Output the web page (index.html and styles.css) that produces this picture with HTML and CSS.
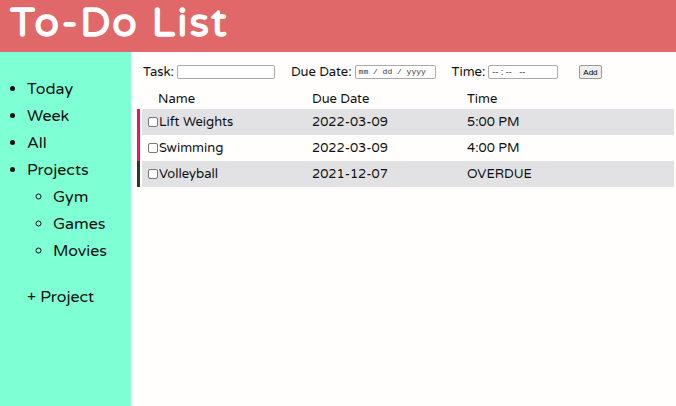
FILE: index.html
```html
<!DOCTYPE html>
<html>
<head>
<meta charset="utf-8">
<link rel="stylesheet" href="styles.css">
</head>
<body>
<header class="header"><h1 class="title">To-Do List</h1></header>
<div class="layout">
  <nav class="sidebar">
    <ul class="nav">
      <li>Today</li>
      <li>Week</li>
      <li>All</li>
      <li>Projects
        <ul class="sub">
          <li>Gym</li>
          <li>Games</li>
          <li>Movies</li>
        </ul>
      </li>
    </ul>
    <div class="add-project">+ Project</div>
  </nav>
  <main class="main">
    <form class="form">
      <label class="field">Task: <input class="inp inp-task" type="text"></label>
      <label class="field">Due Date: <span class="inp inp-date">mm / dd / yyyy</span></label>
      <label class="field">Time: <span class="inp inp-time">-- : --&nbsp;&nbsp;&nbsp;--</span></label>
      <button class="btn" type="button">Add</button>
    </form>
    <div class="thead">
      <span class="c1">Name</span><span class="c2">Due Date</span><span class="c3">Time</span>
    </div>
    <div class="row pink gray">
      <div class="cells"><span class="c1"><span class="cb"></span>Lift Weights</span><span class="c2">2022-03-09</span><span class="c3">5:00 PM</span></div>
    </div>
    <div class="row pink">
      <div class="cells"><span class="c1"><span class="cb"></span>Swimming</span><span class="c2">2022-03-09</span><span class="c3">4:00 PM</span></div>
    </div>
    <div class="row dark gray">
      <div class="cells"><span class="c1"><span class="cb"></span>Volleyball</span><span class="c2">2021-12-07</span><span class="c3">OVERDUE</span></div>
    </div>
  </main>
</div>
</body>
</html>
```
FILE: styles.css
```css
* { box-sizing: border-box; }
html, body { margin: 0; padding: 0; height: 100%; }
body {
  font-family: "Varela Round", "Noto Sans", "Open Sans", sans-serif;
  background: #fffefc;
  color: #111;
  display: flex;
  flex-direction: column;
  overflow: hidden;
}
.header {
  background: #e06868;
  height: 52px;
  flex: none;
}
.title {
  margin: -2px 0 0 0;
  padding-left: 10px;
  font-size: 41px;
  font-weight: 700;
  letter-spacing: 2px;
  line-height: 50px;
  color: #fff;
}
.layout { flex: 1; display: flex; }
.sidebar {
  width: 131px;
  background: #7fffd4;
  flex: none;
  padding-top: 24px;
}
.nav {
  margin: 0;
  padding-left: 27px;
  font-size: 16px;
  list-style: disc;
}
.nav > li { line-height: 27px; }
.sub {
  margin: 0;
  padding-left: 26px;
  list-style: circle;
}
.add-project {
  font-size: 16px;
  padding-left: 27px;
  margin-top: 22px;
}
.main { flex: 1; padding-top: 12px; padding-left: 6px; padding-right: 2px; }
.form {
  display: flex;
  align-items: center;
  font-size: 13px;
  padding-left: 6px;
  height: 16px;
}
.field { display: flex; align-items: center; margin-right: 16px; }
.inp {
  display: inline-block;
  height: 14px;
  border: 1px solid #aaa;
  border-radius: 2px;
  background: #fff;
  margin-left: 3px;
  font-family: "Liberation Mono", monospace;
  font-size: 8px;
  line-height: 12px;
  padding: 0 3px;
  color: #333;
}
.inp-task { width: 98px; }
.inp-date { width: 81px; }
.inp-time { width: 70px; font-family: "Liberation Sans", sans-serif; font-size: 9px; }
.btn {
  margin-left: 5px;
  height: 14px;
  padding: 0 3px;
  font-family: "Liberation Sans", sans-serif;
  font-size: 8px;
  border: 1px solid #999;
  border-radius: 2px;
  background: #eee;
}
.thead {
  display: flex;
  font-size: 13px;
  margin-top: 9px;
  height: 20px;
  line-height: 20px;
  padding-left: 5px;
}
.c1 { width: 170px; padding-left: 16px; display: flex; align-items: center; }
.c2 { width: 155px; }
.c3 { flex: 1; }
.thead .c1 { padding-left: 16px; }
.row { border-left: 3px solid #e8185c; height: 26px; }
.row.dark { border-left-color: #333; }
.cells {
  margin-left: 2px;
  height: 26px;
  display: flex;
  align-items: center;
  font-size: 13px;
}
.row.gray .cells { background: #e2e2e4; }
.cells .c1 { padding-left: 6px; }
.cb {
  display: inline-block;
  width: 10px;
  height: 10px;
  border: 1px solid #777;
  border-radius: 2px;
  background: #fff;
  margin-right: 1px;
}
```
